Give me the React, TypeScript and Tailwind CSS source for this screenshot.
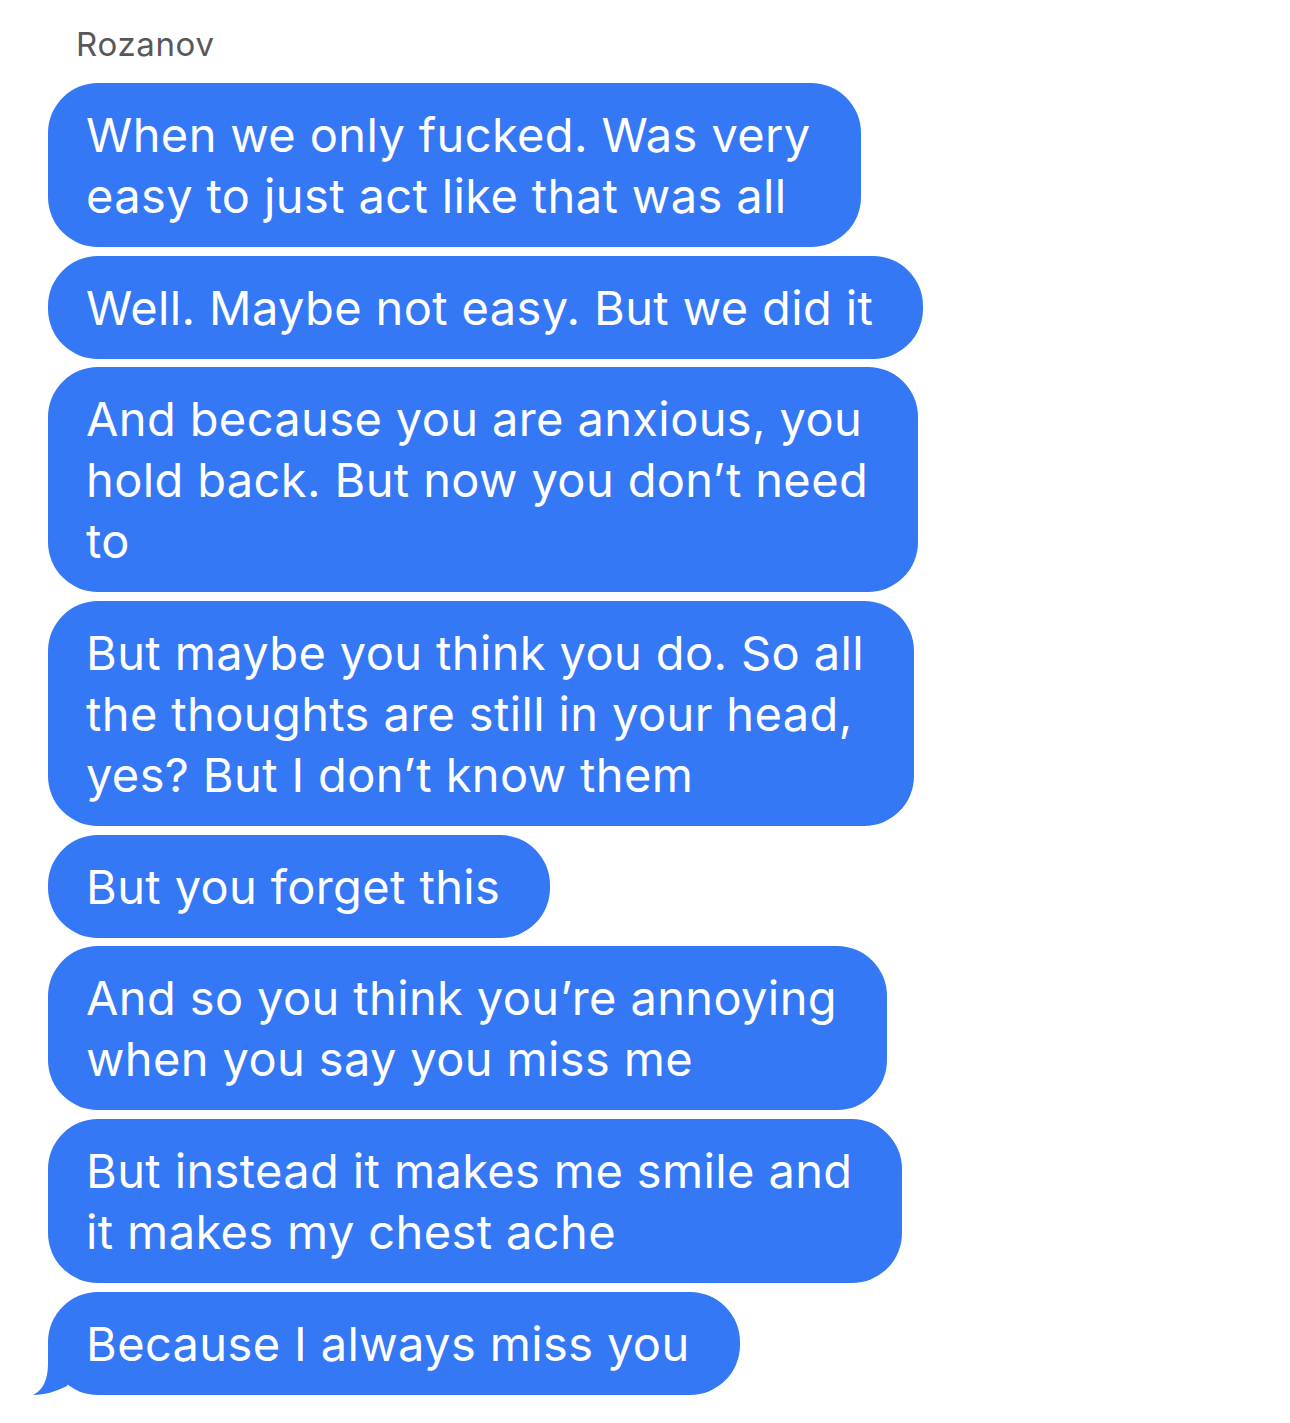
import React from 'react'

const messages: string[][] = [
  ['When we only fucked. Was very', 'easy to just act like that was all'],
  ['Well. Maybe not easy. But we did it'],
  ['And because you are anxious, you', 'hold back. But now you don\u2019t need', 'to'],
  ['But maybe you think you do. So all', 'the thoughts are still in your head,', 'yes? But I don\u2019t know them'],
  ['But you forget this'],
  ['And so you think you\u2019re annoying', 'when you say you miss me'],
  ['But instead it makes me smile and', 'it makes my chest ache'],
  ['Because I always miss you'],
]

function Bubble({ lines, tail }: { lines: string[]; tail?: boolean }) {
  return (
    <div className="relative w-fit rounded-[50px] bg-[#3478f6] pl-[38px] pr-[50px] py-[21px] text-[47px] leading-[61px] tracking-[0.008em] text-white whitespace-nowrap">
      {lines.map((line, i) => (
        <div key={i}>{line}</div>
      ))}
      {tail && (
        <svg
          className="absolute left-[-15px] bottom-0"
          width="50"
          height="48"
          viewBox="0 0 50 48"
        >
          <path
            d="M15 0 L15 16 C15 36 8 44 0 48 C12 48 24 44 34 39 L40 24 Z"
            fill="#3478f6"
          />
        </svg>
      )}
    </div>
  )
}

export default function App() {
  return (
    <div className="min-h-[1423px] w-[1290px] bg-white font-['Inter',sans-serif]">
      <div className="pt-[24px] pl-[76px] text-[33px] leading-[40px] tracking-[0.02em] text-[#58585a]">
        Rozanov
      </div>
      <div className="mt-[19px] flex flex-col gap-[8.7px] pl-[48px]">
        {messages.map((lines, i) => (
          <Bubble key={i} lines={lines} tail={i === messages.length - 1} />
        ))}
      </div>
    </div>
  )
}
